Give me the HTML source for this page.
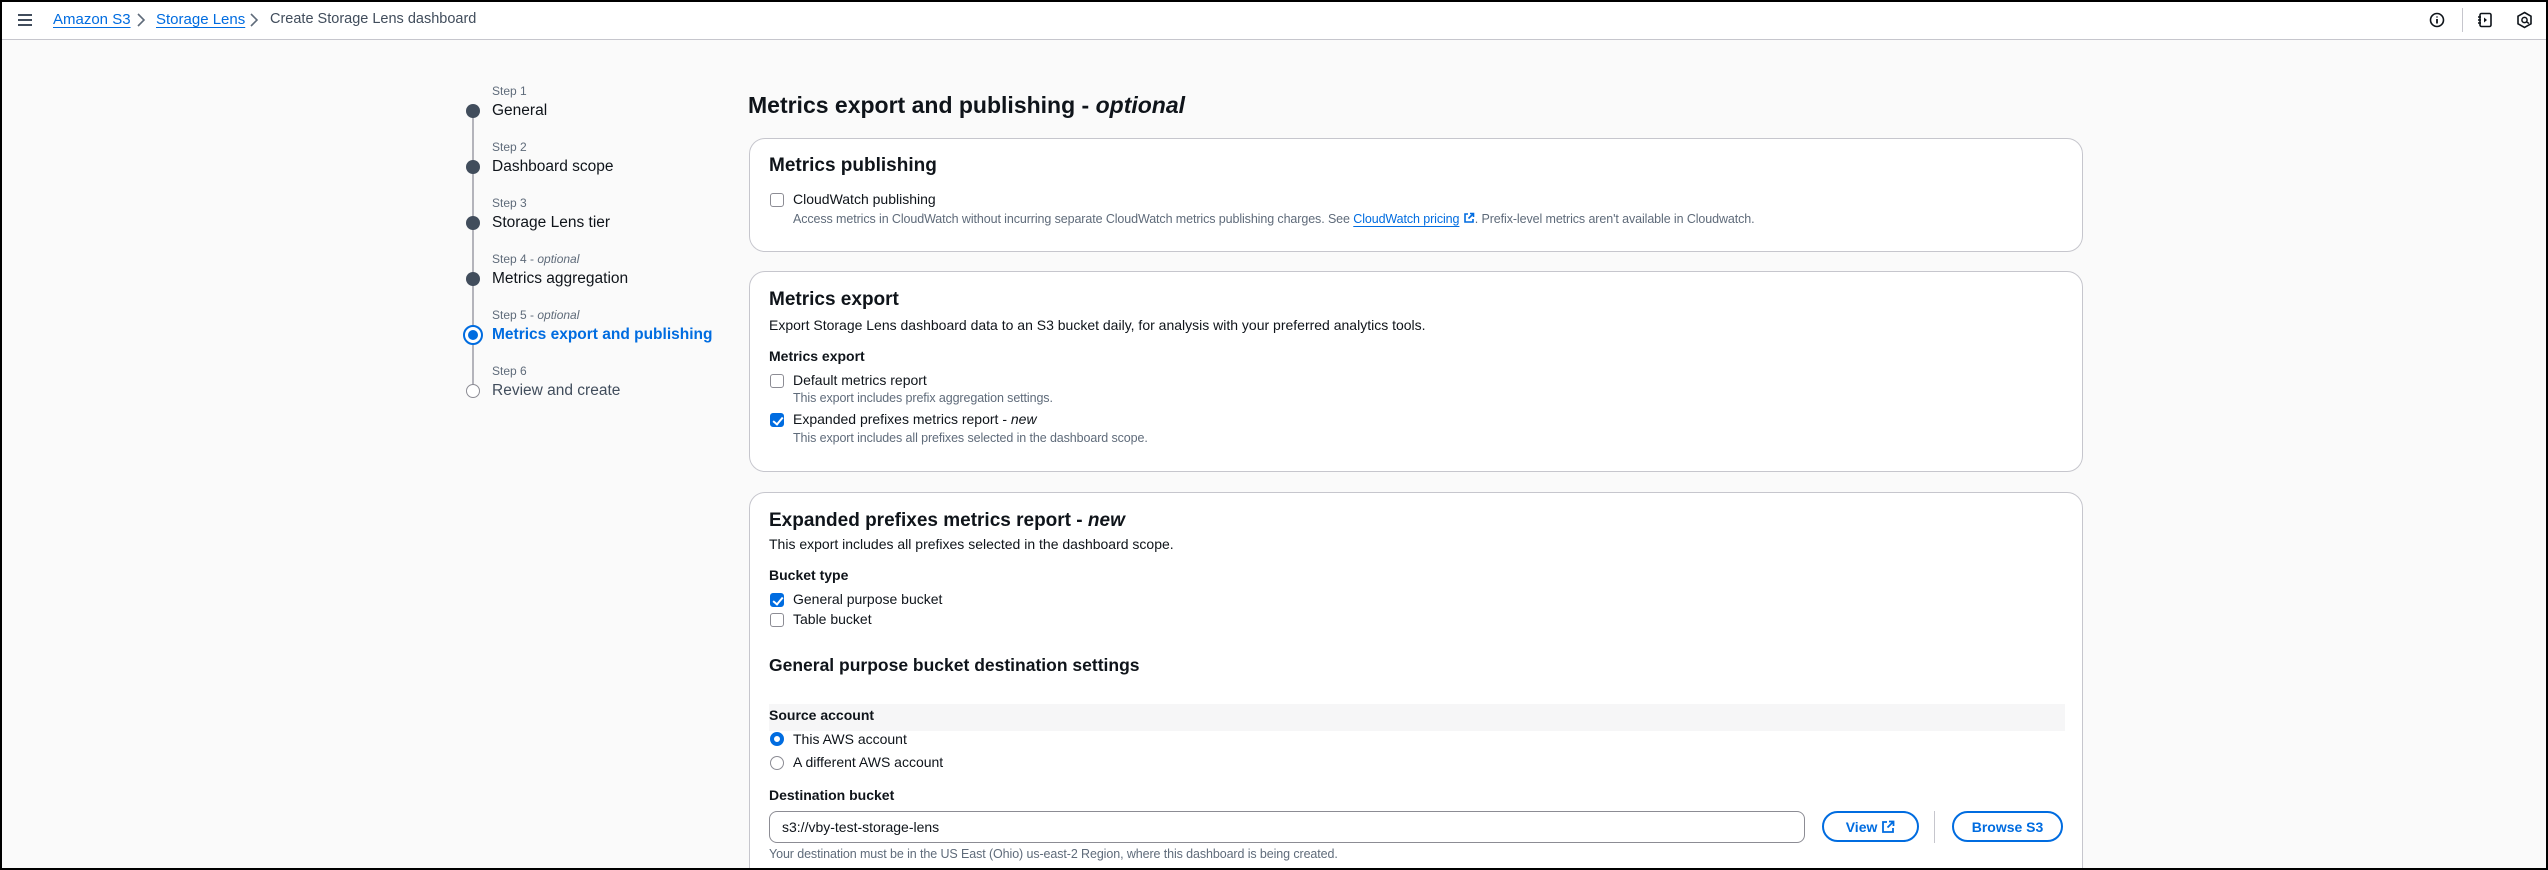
<!DOCTYPE html>
<html><head><meta charset="utf-8"><style>
*{box-sizing:border-box;margin:0;padding:0}
html,body{width:2548px;height:870px;overflow:hidden;background:#fafafa}
#w{position:absolute;left:0;top:0;width:2548px;height:870px;overflow:hidden;background:#fafafa;font-family:"Liberation Sans",sans-serif;color:#0f141a}
#frame{position:absolute;left:0;top:0;width:2548px;height:870px;border:2px solid #000;z-index:10;pointer-events:none}
.a{position:absolute;white-space:nowrap}
.hdr{position:absolute;left:0;top:0;width:2548px;height:40px;background:#fff;border-bottom:1px solid #c6c6cd}
.lnk{color:#006ce0;text-decoration:underline;text-underline-offset:3px}
.sl{font-size:12px;color:#5f6b7a}
.st{font-size:15.5px;color:#0f141a}
.dot{position:absolute;left:466px;width:14px;height:14px;border-radius:50%;background:#414d5c}
.card{position:absolute;left:749px;width:1334px;background:#fff;border:1px solid #c6c6cd;border-radius:16px}
.h2{font-size:19px;font-weight:bold}
.t{font-size:14px}
.d{font-size:12.5px;color:#5f6b7a;letter-spacing:-0.1px}
.cb{position:absolute;width:14px;height:14px;border:1.5px solid #8c8c94;border-radius:3px;background:#fff}
.cb.on{background:#006ce0;border-color:#006ce0}
.cb.on::after{content:"";position:absolute;left:3.5px;top:0.5px;width:4px;height:8px;border:solid #fff;border-width:0 2px 2px 0;transform:rotate(40deg)}
.rd{position:absolute;width:14px;height:14px;border-radius:50%;border:1.5px solid #8c8c94;background:#fff}
.rd.on{border:4px solid #006ce0}
.b{font-weight:bold}
.btn{position:absolute;height:31px;border:2px solid #006ce0;border-radius:16px;color:#006ce0;font-weight:bold;font-size:14px;display:flex;align-items:center;justify-content:center;background:#fff}
</style></head><body><div id="w">
<div class="hdr"></div>
<svg class="a" style="left:17px;top:13px" width="16" height="14"><path d="M1 2h14M1 7h14M1 12h14" stroke="#414d5c" stroke-width="2"/></svg>
<div class="a lnk" style="left:53px;top:11px;font-size:15px">Amazon S3</div>
<svg class="a" style="left:136px;top:13px" width="10" height="14"><path d="M2 1l6 6-6 6" stroke="#5f6b7a" stroke-width="1.6" fill="none"/></svg>
<div class="a lnk" style="left:156px;top:11px;font-size:15px">Storage Lens</div>
<svg class="a" style="left:249px;top:13px" width="10" height="14"><path d="M2 1l6 6-6 6" stroke="#5f6b7a" stroke-width="1.6" fill="none"/></svg>
<div class="a" style="left:270px;top:11px;font-size:14.5px;color:#414d5c">Create Storage Lens dashboard</div>
<svg class="a" style="left:2429px;top:12px" width="16" height="16"><circle cx="8" cy="8" r="6.5" stroke="#0f141a" stroke-width="1.6" fill="none"/><path d="M8 7v4.5M8 4.5v1" stroke="#0f141a" stroke-width="1.8"/></svg>
<div class="a" style="left:2462px;top:8px;width:1px;height:24px;background:#c6c6cd"></div>
<svg class="a" style="left:2477px;top:12px" width="16" height="16"><rect x="3" y="1.5" width="11" height="13" rx="1.5" stroke="#0f141a" stroke-width="1.6" fill="none"/><path d="M1 5h3M1 8h3M1 11h3" stroke="#0f141a" stroke-width="1.5"/><path d="M7 5.5l3 2.5-3 2.5z" fill="#0f141a"/></svg>
<svg class="a" style="left:2516px;top:11px" width="17" height="18"><path d="M8.5 1.5l6.5 3.7v7.6l-6.5 3.7-6.5-3.7V5.2z" stroke="#0f141a" stroke-width="1.6" fill="none"/><circle cx="8.5" cy="9" r="2.6" stroke="#0f141a" stroke-width="1.5" fill="none"/><path d="M10 10.5l3 2" stroke="#0f141a" stroke-width="1.5"/></svg>

<div class="a" style="left:472px;top:112px;width:2px;height:280px;background:#b4b4bb"></div>
<div class="a sl" style="left:492px;top:84px">Step 1</div><div class="a st" style="left:492px;top:102px">General</div><div class="dot" style="top:104px"></div>
<div class="a sl" style="left:492px;top:140px">Step 2</div><div class="a st" style="left:492px;top:158px">Dashboard scope</div><div class="dot" style="top:160px"></div>
<div class="a sl" style="left:492px;top:196px">Step 3</div><div class="a st" style="left:492px;top:214px">Storage Lens tier</div><div class="dot" style="top:216px"></div>
<div class="a sl" style="left:492px;top:252px">Step 4 - <i>optional</i></div><div class="a st" style="left:492px;top:270px">Metrics aggregation</div><div class="dot" style="top:272px"></div>
<div class="a sl" style="left:492px;top:308px">Step 5 - <i>optional</i></div><div class="a st b" style="left:492px;top:326px;color:#006ce0">Metrics export and publishing</div>
<div class="a" style="left:463px;top:325px;width:20px;height:20px;border-radius:50%;border:2px solid #006ce0;background:#fff"></div><div class="a" style="left:468px;top:330px;width:10px;height:10px;border-radius:50%;background:#006ce0"></div>
<div class="a sl" style="left:492px;top:364px">Step 6</div><div class="a st" style="left:492px;top:382px;color:#414d5c">Review and create</div>
<div class="a" style="left:466px;top:384px;width:14px;height:14px;border-radius:50%;border:1.5px solid #8c8c94;background:#fff"></div>

<div class="a" style="left:748px;top:92px;font-size:23px;font-weight:bold">Metrics export and publishing - <i>optional</i></div>

<div class="card" style="top:138px;height:114px"></div>
<div class="a h2" style="left:769px;top:155px">Metrics publishing</div>
<div class="cb" style="left:770px;top:193px"></div>
<div class="a t" style="left:793px;top:191px">CloudWatch publishing</div>
<div class="a d" style="left:793px;top:212px">Access metrics in CloudWatch without incurring separate CloudWatch metrics publishing charges. See <span class="lnk">CloudWatch pricing</span> <svg width="12" height="12" style="vertical-align:-1px"><path d="M5 2H2v8h8V7M7 1.5h3.5V5M10.5 1.5L5.5 6.5" stroke="#006ce0" stroke-width="1.6" fill="none"/></svg>. Prefix-level metrics aren't available in Cloudwatch.</div>

<div class="card" style="top:271px;height:201px"></div>
<div class="a h2" style="left:769px;top:289px">Metrics export</div>
<div class="a t" style="left:769px;top:317px">Export Storage Lens dashboard data to an S3 bucket daily, for analysis with your preferred analytics tools.</div>
<div class="a t b" style="left:769px;top:348px">Metrics export</div>
<div class="cb" style="left:770px;top:374px"></div><div class="a t" style="left:793px;top:372px">Default metrics report</div>
<div class="a d" style="left:793px;top:391px">This export includes prefix aggregation settings.</div>
<div class="cb on" style="left:770px;top:413px"></div><div class="a t" style="left:793px;top:411px">Expanded prefixes metrics report - <i>new</i></div>
<div class="a d" style="left:793px;top:431px">This export includes all prefixes selected in the dashboard scope.</div>

<div class="card" style="top:492px;height:420px"></div>
<div class="a h2" style="left:769px;top:510px">Expanded prefixes metrics report - <i>new</i></div>
<div class="a t" style="left:769px;top:536px">This export includes all prefixes selected in the dashboard scope.</div>
<div class="a t b" style="left:769px;top:567px">Bucket type</div>
<div class="cb on" style="left:770px;top:593px"></div><div class="a t" style="left:793px;top:591px">General purpose bucket</div>
<div class="cb" style="left:770px;top:613px"></div><div class="a t" style="left:793px;top:611px">Table bucket</div>
<div class="a" style="left:769px;top:655px;font-size:17.5px;font-weight:bold">General purpose bucket destination settings</div>
<div class="a" style="left:769px;top:704px;width:1296px;height:27px;background:#f6f6f7"></div>
<div class="a t b" style="left:769px;top:707px">Source account</div>
<div class="rd on" style="left:770px;top:732px"></div><div class="a t" style="left:793px;top:731px">This AWS account</div>
<div class="rd" style="left:770px;top:756px"></div><div class="a t" style="left:793px;top:754px">A different AWS account</div>
<div class="a t b" style="left:769px;top:787px">Destination bucket</div>
<div class="a" style="left:769px;top:811px;width:1036px;height:32px;border:1px solid #8c8c94;border-radius:8px;background:#fff"></div>
<div class="a t" style="left:782px;top:819px">s3://vby-test-storage-lens</div>
<div class="btn" style="left:1822px;top:811px;width:97px">View&nbsp;<svg width="14" height="14"><path d="M6 2H2v10h10V8M8 1.5h4.5V6M12.5 1.5L6.5 7.5" stroke="#006ce0" stroke-width="1.8" fill="none"/></svg></div>
<div class="a" style="left:1934px;top:811px;width:1px;height:32px;background:#c6c6cd"></div>
<div class="btn" style="left:1952px;top:811px;width:111px">Browse S3</div>
<div class="a d" style="left:769px;top:847px">Your destination must be in the US East (Ohio) us-east-2 Region, where this dashboard is being created.</div>
<div id="frame"></div>
</div></body></html>
